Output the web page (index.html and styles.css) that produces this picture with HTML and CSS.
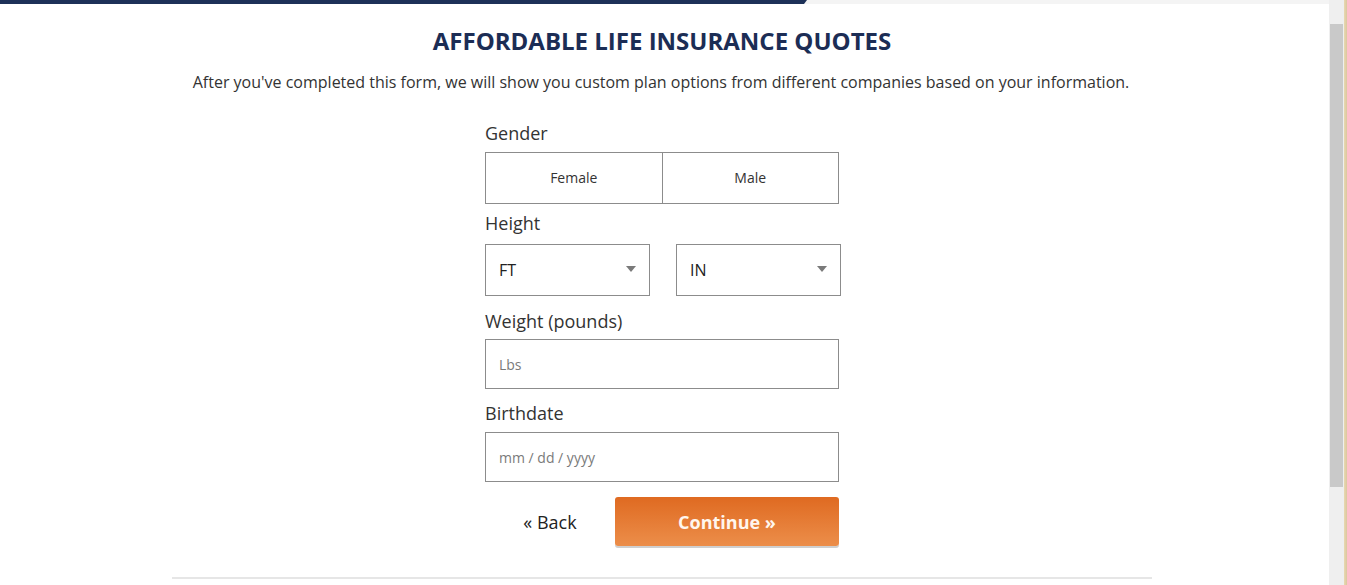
FILE: index.html
```html
<!DOCTYPE html>
<html lang="en">
<head>
<meta charset="utf-8">
<title>Affordable Life Insurance Quotes</title>
<link rel="stylesheet" href="styles.css">
</head>
<body>
<div class="page">
  <main class="main">
    <div class="progress"><div class="progress-fill"></div></div>
    <div class="container">
      <h1 class="title">AFFORDABLE LIFE INSURANCE QUOTES</h1>
      <p class="lead">After you've completed this form, we will show you custom plan options from different companies based on your information.</p>
      <form class="form">
        <div class="field">
          <div class="label">Gender</div>
          <div class="toggle">
            <div class="toggle-opt">Female</div>
            <div class="toggle-opt">Male</div>
          </div>
        </div>
        <div class="field field-height">
          <div class="label">Height</div>
          <div class="selects">
            <div class="select"><span>FT</span><span class="caret"></span></div>
            <div class="select"><span>IN</span><span class="caret"></span></div>
          </div>
        </div>
        <div class="field field-weight">
          <div class="label">Weight (pounds)</div>
          <div class="input"><span class="ph">Lbs</span></div>
        </div>
        <div class="field field-birth">
          <div class="label">Birthdate</div>
          <div class="input"><span class="ph">mm / dd / yyyy</span></div>
        </div>
        <div class="actions">
          <div class="back">« Back</div>
          <div class="continue">Continue »</div>
        </div>
      </form>
      <div class="divider"></div>
    </div>
  </main>
  <div class="scrollbar">
    <div class="track"><div class="thumb"></div></div>
    <div class="edge"></div>
  </div>
</div>
</body>
</html>
```
FILE: styles.css
```css
html, body {
  margin: 0;
  padding: 0;
  height: 100%;
  overflow: hidden;
  background: #fff;
}
body {
  font-family: "Open Sans", "Liberation Sans", sans-serif;
  color: #333;
}
.page {
  display: flex;
  height: 585px;
}
.main {
  flex: 1;
  padding-right: 5px;
  overflow: hidden;
}
.progress {
  height: 4px;
  background: #f4f4f4;
  margin-right: -5px;
}
.progress-fill {
  width: 807px;
  height: 4px;
  background: #1d3158;
  clip-path: polygon(0 0, 100% 0, calc(100% - 3px) 100%, 0 100%);
}
.container {
  width: 980px;
  margin: 0 auto;
  display: flex;
  flex-direction: column;
  align-items: center;
}
.title {
  margin: 21px 0 0;
  font-size: 24px;
  line-height: 32px;
  font-weight: 700;
  color: #1c2d55;
  letter-spacing: 0;
}
.lead {
  margin: 13px 0 0;
  font-size: 16px;
  line-height: 24px;
  color: #333;
  transform: translateX(-1px);
}
.form {
  width: 354px;
  margin-top: 27px;
  display: flex;
  flex-direction: column;
}
.label {
  font-size: 18px;
  line-height: 24px;
  color: #333;
  margin-bottom: 7px;
}
.field-height { margin-top: 7px; }
.field-height .label { margin-bottom: 9px; }
.field-weight { margin-top: 13px; }
.field-weight .label { margin-bottom: 6px; }
.field-birth { margin-top: 12px; }
.toggle {
  display: flex;
  height: 52px;
  border: 1px solid #8c8c8c;
  box-sizing: border-box;
}
.toggle-opt {
  flex: 1;
  display: flex;
  align-items: center;
  justify-content: center;
  font-size: 14px;
  color: #333;
  padding-bottom: 2px;
}
.toggle-opt + .toggle-opt {
  border-left: 1px solid #8c8c8c;
}
.selects {
  display: flex;
  gap: 26px;
  width: 356px;
}
.select {
  width: 165px;
  height: 52px;
  box-sizing: border-box;
  border: 1px solid #8c8c8c;
  display: flex;
  align-items: center;
  justify-content: space-between;
  padding: 0 13px 0 13px;
  font-size: 16px;
  color: #222;
}
.caret {
  width: 0;
  height: 0;
  border-left: 5px solid transparent;
  border-right: 5px solid transparent;
  border-top: 6px solid #7a7a7a;
  margin-top: -2px;
}
.input {
  height: 50px;
  box-sizing: border-box;
  border: 1px solid #8c8c8c;
  display: flex;
  align-items: center;
  padding-left: 13px;
}
.ph {
  font-size: 14px;
  color: #7a7a7a;
}
.actions {
  display: flex;
  margin-top: 15px;
  height: 51px;
}
.back {
  width: 130px;
  display: flex;
  align-items: center;
  justify-content: center;
  font-size: 18px;
  color: #222;
  padding-bottom: 2px;
}
.continue {
  width: 224px;
  height: 49px;
  border-radius: 3px;
  background: linear-gradient(#df6a21, #ec8e4a);
  box-shadow: 0 2px 0 #cfcfcf;
  display: flex;
  align-items: center;
  justify-content: center;
  color: #fff6ee;
  font-size: 18px;
  font-weight: 700;
}
.divider {
  width: 980px;
  height: 2px;
  background: #e6e6e6;
  margin-top: 29px;
}
.scrollbar {
  width: 18px;
  display: flex;
  flex-shrink: 0;
}
.track {
  width: 15px;
  background: #efefef;
  padding-top: 24px;
  box-sizing: border-box;
}
.thumb {
  height: 463px;
  background: #c9c9c9;
  margin: 0 1px;
}
.edge {
  width: 3px;
  background: linear-gradient(90deg, #ead9b0, #d9c7a0);
}
```
